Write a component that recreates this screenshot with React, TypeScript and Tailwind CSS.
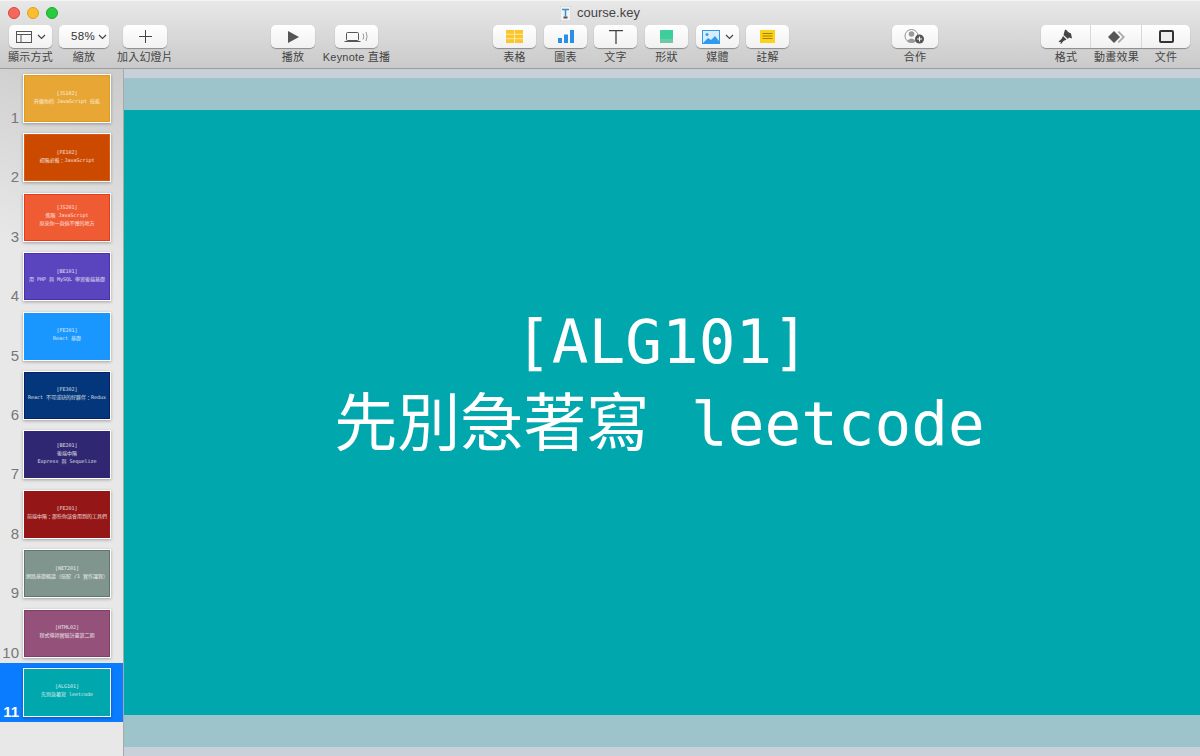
import type { ReactNode } from 'react';

const labelFont = "font-['Liberation_Sans','Noto_Sans_CJK_TC',sans-serif]";
const monoFont = "font-['DejaVu_Sans_Mono','Noto_Sans_CJK_TC',monospace]";

const slides = [
    { bg: 'bg-[#e8a635]', edge: 'border-[#e09a20]', lines: ['[JS102]', '升級你的 JavaScript 技能'] },
    { bg: 'bg-[#cc4a00]', edge: 'border-[#d85a10]', lines: ['[FE102]', '初階必備：JavaScript'] },
    { bg: 'bg-[#ef5b33]', edge: 'border-[#e8391a]', lines: ['[JS201]', '進階 JavaScript', '原來你一直搞不懂的地方'] },
    { bg: 'bg-[#5a45bf]', edge: 'border-[#4a30b0]', lines: ['[BE101]', '用 PHP 與 MySQL 學習後端基礎'] },
    { bg: 'bg-[#1a96ff]', edge: 'border-[#1a96ff]', lines: ['[FE201]', 'React 基礎'] },
    { bg: 'bg-[#03367a]', edge: 'border-[#0a1f6a]', lines: ['[FE302]', 'React 不可或缺的好夥伴：Redux'] },
    { bg: 'bg-[#2f2771]', edge: 'border-[#2f2771]', lines: ['[BE201]', '後端中階', 'Express 與 Sequelize'] },
    { bg: 'bg-[#951616]', edge: 'border-[#951616]', lines: ['[FE201]', '前端中階：那些你該會用到的工具們'] },
    { bg: 'bg-[#81958f]', edge: 'border-[#5f7570]', lines: ['[NET201]', '網路基礎概論（搭配 /1 實作課程）'] },
    { bg: 'bg-[#94527a]', edge: 'border-[#7f3f68]', lines: ['[HTML02]', '程式導師實驗計畫第二期'] },
    { bg: 'bg-[#00a7ad]', edge: 'border-[#00a7ad]', lines: ['[ALG101]', '先別急著寫 leetcode'] },
];

const Chevron = () => (
    <svg width="9" height="6" viewBox="0 0 9 6" fill="none" stroke="#444" strokeWidth="1.2">
        <path d="M1 1l3.5 3.5L8 1" />
    </svg>
);

const ToolItem = ({ label, className, gap = '', children }: { label: string; className: string; gap?: string; children: ReactNode }) => (
    <div className={`flex flex-col items-center ${className}`}>
        <div className={`flex h-[23px] w-full items-center justify-center rounded-[5px] bg-gradient-to-b from-white to-[#f1f1f1] shadow-[0_1px_1px_rgba(0,0,0,0.35)] ${gap}`}>
            {children}
        </div>
        <span className={`mt-[2px] whitespace-nowrap text-[11px] leading-[14px] tracking-[0.2px] text-[#444] ${labelFont}`}>{label}</span>
    </div>
);

const Thumb = ({ index }: { index: number }) => {
    const slide = slides[index];
    const selected = index === 10;
    return (
        <div className={`flex h-[59.4px] items-start pt-[5px] ${selected ? 'bg-[#0a7cff]' : ''}`}>
            <div className={`flex h-[49px] w-[19px] items-end justify-end text-[15px] leading-[10px] ${labelFont} ${selected ? 'font-bold text-white' : 'text-[#777]'}`}>
                {index + 1}
            </div>
            <div className="ml-[4px] h-[49px] w-[88px] bg-white p-px shadow-[0_1px_3px_rgba(0,0,0,0.3)]">
                <div className={`flex h-full flex-col items-center justify-center border pb-[4px] text-center text-[5px] leading-[8px] text-white/80 ${slide.bg} ${slide.edge} ${monoFont}`}>
                    {slide.lines.map((line) => (
                        <span key={line} className="whitespace-nowrap">{line}</span>
                    ))}
                </div>
            </div>
        </div>
    );
};

export default function App() {
    return (
        <div className="flex h-[756px] w-[1200px] flex-col overflow-hidden bg-[#e8e8e8]">
            <header className="h-[69px] shrink-0 border-b border-[#9c9c9c] border-t border-t-[#f4f4f4] bg-gradient-to-b from-[#e8e8e8] to-[#cacaca]">
                {/* title bar */}
                <div className="grid h-[24px] grid-cols-[1fr_auto_1fr] items-center">
                    <div className="flex items-center gap-[7px] pl-[8px]">
                        <span className="h-[12px] w-[12px] rounded-full border border-[#e0443e] bg-[#f4695c]" />
                        <span className="h-[12px] w-[12px] rounded-full border border-[#dea123] bg-[#fbbe2e]" />
                        <span className="h-[12px] w-[12px] rounded-full border border-[#1aab29] bg-[#29c940]" />
                    </div>
                    <div className="flex items-center gap-[6px]">
                        <svg width="11" height="15" viewBox="0 0 11 15">
                            <rect x="0" y="0" width="11" height="15" rx="1" fill="#f2f2f2" stroke="#b5b5b5" strokeWidth="0.6" />
                            <path d="M2 3.500h7M5.500 3.500v7" stroke="#3f8fc9" strokeWidth="1.500" />
                            <rect x="3.500" y="10.500" width="4" height="2" fill="#555" />
                        </svg>
                        <span className={`text-[13px] leading-[16px] text-[#444] ${labelFont}`}>course.key</span>
                    </div>
                    <div />
                </div>

                {/* toolbar */}
                <div className="flex items-start">
                    <ToolItem label="顯示方式" className="ml-[9px] w-[43px]" gap="gap-[5px]">
                        <svg width="16" height="12" viewBox="0 0 16 12" fill="none" stroke="#555" strokeWidth="1">
                            <rect x="0.500" y="0.500" width="15" height="11" />
                            <path d="M0.500 3.500h15M5 3.500v8" />
                        </svg>
                        <Chevron />
                    </ToolItem>
                    <ToolItem label="縮放" className="ml-[7px] w-[50px]" gap="gap-[3px] pl-[10px]">
                        <span className={`text-[11.5px] tracking-[0.3px] text-[#333] ${labelFont}`}>58%</span>
                        <Chevron />
                    </ToolItem>
                    <ToolItem label="加入幻燈片" className="ml-[14px] w-[44px]">
                        <svg width="13" height="13" viewBox="0 0 13 13" stroke="#444" strokeWidth="1">
                            <path d="M6.500 0v13M0 6.500h13" />
                        </svg>
                    </ToolItem>
                    <ToolItem label="播放" className="ml-[104px] w-[44px]">
                        <svg width="11" height="12" viewBox="0 0 11 12" fill="#555">
                            <path d="M0 0l11 6-11 6z" />
                        </svg>
                    </ToolItem>
                    <ToolItem label="Keynote 直播" className="ml-[20px] w-[43px]">
                        <svg width="26" height="12" viewBox="0 0 26 12" fill="none" stroke="#555" strokeWidth="1">
                            <rect x="2.500" y="1.500" width="12" height="8" rx="1" />
                            <path d="M0.500 10.500h16" />
                            <path d="M19 2.500q1.500 3 0 6M22 1q2.200 4.500 0 9" stroke="#999" />
                        </svg>
                    </ToolItem>
                    <ToolItem label="表格" className="ml-[115px] w-[43px]">
                        <svg width="17" height="13" viewBox="0 0 17 13">
                            <rect width="17" height="13" fill="#fdc52c" />
                            <path d="M0 4.300h17M0 8.700h17M8.500 0v13" stroke="#fff3c4" strokeWidth="0.800" />
                        </svg>
                    </ToolItem>
                    <ToolItem label="圖表" className="ml-[8px] w-[43px]">
                        <svg width="16" height="13" viewBox="0 0 16 13" fill="#2b8fe8">
                            <rect x="0" y="8" width="4" height="5" />
                            <rect x="6" y="4.500" width="4" height="8.500" />
                            <rect x="12" y="0" width="4" height="13" />
                        </svg>
                    </ToolItem>
                    <ToolItem label="文字" className="ml-[7px] w-[43px]">
                        <svg width="14" height="14" viewBox="0 0 14 14" stroke="#444" strokeWidth="1.300" fill="none">
                            <path d="M0 0.700h14M7 0.700V14" />
                        </svg>
                    </ToolItem>
                    <ToolItem label="形狀" className="ml-[8px] w-[43px]">
                        <svg width="13" height="13" viewBox="0 0 13 13">
                            <rect width="13" height="13" fill="#3ccf9c" />
                            <rect y="9" width="13" height="4" fill="#6fc9a8" />
                        </svg>
                    </ToolItem>
                    <ToolItem label="媒體" className="ml-[8px] w-[43px]" gap="gap-[5px]">
                        <svg width="18" height="14" viewBox="0 0 18 14">
                            <rect width="18" height="14" fill="#2f9bf0" />
                            <rect x="1" y="1" width="16" height="12" fill="#d8ecfb" />
                            <circle cx="5" cy="4.500" r="1.500" fill="#2f9bf0" />
                            <path d="M1 13l5-5 3 2 4-4 4 5v2z" fill="#2f9bf0" />
                        </svg>
                        <Chevron />
                    </ToolItem>
                    <ToolItem label="註解" className="ml-[7px] w-[43px]">
                        <svg width="15" height="13" viewBox="0 0 15 13">
                            <rect width="15" height="13" fill="#fcd116" />
                            <path d="M2.500 3.500h10M2.500 6h10M2.500 8.500h10" stroke="#8a6d00" strokeWidth="0.800" />
                        </svg>
                    </ToolItem>
                    <ToolItem label="合作" className="ml-[103px] w-[46px]">
                        <svg width="22" height="16" viewBox="0 0 22 16">
                            <circle cx="7.500" cy="7" r="6.500" fill="none" stroke="#777" strokeWidth="0.800" />
                            <circle cx="7.500" cy="5" r="2.800" fill="#999" />
                            <path d="M3 12q4.500-5 9 0l-2 1.500h-5z" fill="#999" />
                            <circle cx="15.500" cy="10" r="4.500" fill="#555" />
                            <path d="M13 10h5M15.500 7.500v5" stroke="#fff" strokeWidth="1.100" />
                        </svg>
                    </ToolItem>

                    {/* inspector tabs */}
                    <div className="ml-[103px] flex flex-col">
                        <div className="flex h-[23px] w-[149px] divide-x divide-[#d8d8d8] rounded-[5px] bg-gradient-to-b from-white to-[#f1f1f1] shadow-[0_1px_1px_rgba(0,0,0,0.35)]">
                            <div className="flex w-[50px] items-center justify-center">
                                <svg width="16" height="16" viewBox="0 0 16 16" fill="#444">
                                    <path d="M7 0.500l2 1 1 1.500 3 1.500 1 5-3-1-1 1.500-4.500-4z" />
                                    <path d="M5 7l3.500 3.500-3 1.500-2.500 3-2.500-2.500 3-2.500z" />
                                    <circle cx="2" cy="13.500" r="0.800" fill="#fff" />
                                </svg>
                            </div>
                            <div className="flex w-[51px] items-center justify-center">
                                <svg width="17" height="12" viewBox="0 0 17 12">
                                    <path d="M11 0l6 6-6 6-1.300-1.300L14.400 6 9.700 1.300z" fill="#aaa" />
                                    <path d="M6 0l6 6-6 6-6-6z" fill="#555" />
                                </svg>
                            </div>
                            <div className="flex flex-1 items-center justify-center">
                                <svg width="15" height="13" viewBox="0 0 15 13" fill="#eee" stroke="#333" strokeWidth="2">
                                    <rect x="1" y="1" width="13" height="11" rx="1" />
                                </svg>
                            </div>
                        </div>
                        <div className={`mt-[2px] flex whitespace-nowrap text-[11px] leading-[14px] tracking-[0.2px] text-[#444] ${labelFont}`}>
                            <span className="w-[50px] text-center">格式</span>
                            <span className="w-[51px] text-center">動畫效果</span>
                            <span className="flex-1 text-center">文件</span>
                        </div>
                    </div>
                </div>
            </header>

            <div className="flex min-h-0 flex-1">
                <aside className="w-[124px] shrink-0 border-r border-[#a9a9a9] bg-[linear-gradient(200deg,#cbcbcb_0%,#e8e8e8_30%)]">
                    {slides.map((slide, i) => (
                        <Thumb key={slide.lines[0] + i} index={i} />
                    ))}
                </aside>

                <main className="flex flex-1 flex-col bg-[#c8d0da]">
                    <div className="mt-[9px] h-[32px] bg-[#9dc3cb]" />
                    <div className={`flex h-[605px] flex-col items-center justify-center whitespace-pre bg-[#00a7ad] pb-[60px] text-[61px] leading-[82px] text-white ${monoFont}`}>
                        <span>[ALG101]</span>
                        <span className="pr-[5px]">
                            <span className="mr-[5px] text-[63px]">先別急著寫</span> leetcode
                        </span>
                    </div>
                    <div className="h-[32px] bg-[#9dc3cb]" />
                </main>
            </div>
        </div>
    );
}
